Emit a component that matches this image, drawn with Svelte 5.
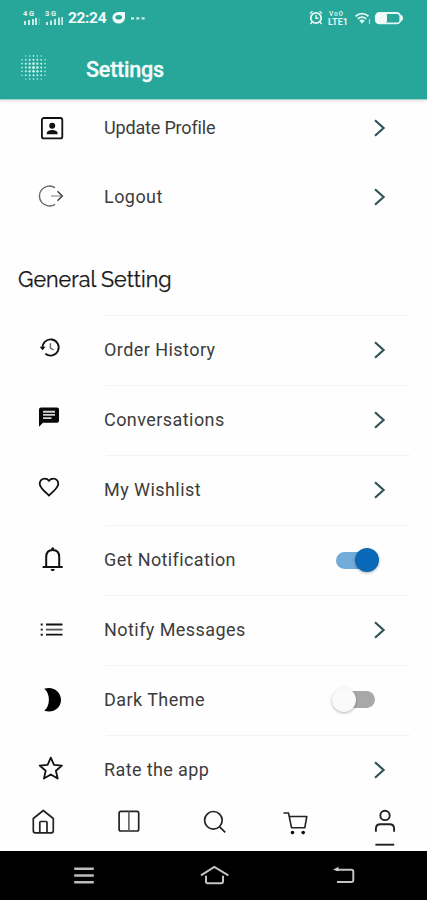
<script>
  const account = [
    { icon: 'profile', label: 'Update Profile', tight: true },
    { icon: 'logout', label: 'Logout' }
  ];
  const general = [
    { icon: 'history', label: 'Order History' },
    { icon: 'chat', label: 'Conversations' },
    { icon: 'heart', label: 'My Wishlist' },
    { icon: 'bell', label: 'Get Notification', toggle: 'on', mid: true },
    { icon: 'list', label: 'Notify Messages' },
    { icon: 'moon', label: 'Dark Theme', toggle: 'off' },
    { icon: 'star', label: 'Rate the app', mid: true }
  ];
  const dots = [];
  for (let r = -3; r <= 3; r++)
    for (let c = -3; c <= 3; c++) {
      const d = Math.hypot(r, c);
      if (d < 3.7) dots.push({ x: 12 + c * 3.7, y: 12 + r * 3.7, s: 1.45 - d * 0.22 });
    }
</script>

{#snippet glyph(name)}
  <svg class="glyph" width="32" height="32" viewBox="0 0 32 32" fill="none" stroke="#111" stroke-width="1.8">
    {#if name === 'profile'}
      <rect x="6.9" y="6" width="20.4" height="20.4" rx="2" />
      <circle cx="17.2" cy="13.7" r="3" fill="#111" stroke="none" />
      <path d="M11.8 22.3v-1.2c0-2 3.2-3.2 5.4-3.2s5.4 1.2 5.4 3.2v1.2z" fill="#111" stroke="none" />
    {:else if name === 'logout'}
      <path d="M19.5 7.2A10 10 0 1 0 19.5 23.8" transform="translate(.5 -.5)" stroke="#666" stroke-width="1.4" />
      <path d="M16 15h11" stroke="#999" stroke-width="1.3" />
      <path d="M22.5 10.3l4.8 4.7-4.8 4.7" stroke="#444" stroke-width="1.5" />
    {:else if name === 'history'}
      <path d="M7.6 14.5A8.1 8.1 0 1 1 10.3 19.6" />
      <path d="M4.6 12.7h6l-3 3.6z" fill="#111" stroke="none" />
      <path d="M15.4 9.2v4.8l3.3 2" stroke="#666" stroke-width="1.4" />
    {:else if name === 'chat'}
      <path d="M6 3.4h16a2 2 0 0 1 2 2v11.4a2 2 0 0 1-2 2H8l-4 4V5.4a2 2 0 0 1 2-2z" fill="#080808" stroke="none" />
      <path d="M8 7.7h12M8 10.9h12M8 14.1h8.5" stroke="#d5d5d5" stroke-width="1.9" />
    {:else if name === 'heart'}
      <path d="M14 21.5l-1.4-1.3C7.5 15.7 4.7 13 4.7 9.7A4.9 4.9 0 0 1 9.6 4.7c1.7 0 3.4.8 4.4 2.1 1-1.3 2.7-2.1 4.4-2.1a4.9 4.9 0 0 1 4.9 5c0 3.3-2.8 6-7.9 10.5z" />
    {:else if name === 'bell'}
      <path d="M11.2 22.2v-9.1c0-4.4 2.5-7.1 6.5-7.1s6.5 2.7 6.5 7.1v9.1M7.6 22.9h20.1" stroke-width="2" />
      <path d="M16.2 5.8v-1.1a1.5 1.5 0 0 1 3 0v1.1zM15.6 25.1h4.2a2.1 2.1 0 0 1-4.2 0z" fill="#111" stroke="none" />
    {:else if name === 'list'}
      <path d="M11 10.5h16.5M11 20.7h16.5" />
      <path d="M11 15.6h16.5" stroke="#555" />
      <path d="M5.7 10.5h2M5.7 15.6h2M5.7 20.7h2" stroke-width="1.9" />
    {:else if name === 'moon'}
      <path d="M9.2 4.8C18 1.7 26 7.6 26 15.8S18 29.8 9.2 26.8C15.5 22.2 15.5 9.3 9.2 4.8z" fill="#000" stroke="none" />
    {:else if name === 'star'}
      <path d="M15.8 3.6l3.2 7.3 7.9.7-6 5.2 1.8 7.8-6.9-4.1-6.9 4.1 1.8-7.8-6-5.2 7.9-.7z" stroke-linejoin="round" />
    {/if}
  </svg>
{/snippet}

{#snippet row(item)}
  <div class="row">
    {@render glyph(item.icon)}
    <span class="label" class:tight={item.tight} class:mid={item.mid}>{item.label}</span>
    {#if item.toggle}
      <span class="switch {item.toggle}"><i></i></span>
    {:else}
      <svg class="chevron" width="14" height="20" viewBox="0 0 14 20" fill="none" stroke="#31545a" stroke-width="2.2">
        <path d="M2 2.2l8.6 7.8L2 17.8" />
      </svg>
    {/if}
  </div>
{/snippet}

<div class="screen">
  <header>
    <div class="status">
      <svg class="signal" width="45" height="16" viewBox="0 0 45 16" fill="#e5f7f3">
        <text x="1" y="5.5" font-size="7.5" textLength="11">4G</text>
        <path d="M2 11h2v4H2zM6 10h2v5H6zM10 9h2v6h-2zM13 8h2v7h-2z" opacity=".85" />
        <path d="M16.5 8h1.5v7h-1.5z" opacity=".25" />
        <text x="23" y="5.5" font-size="7.5" textLength="11">3G</text>
        <path d="M24 12h2v3h-2zM28 10.5h2V15h-2zM32 9h2v6h-2zM36 7.5h2v7.5h-2zM39.3 7h1.7v8h-1.7z" opacity=".85" />
      </svg>
      <span class="time">22:24</span>
      <svg class="drop" width="34" height="14" viewBox="0 0 34 14">
        <path d="M6.5 1H12q1 0 1 1v5A6.3 5.8 0 1 1 6.5 1z" fill="#effaf8" />
        <ellipse cx="6.7" cy="6.3" rx="3.3" ry="2.3" fill="#27a69a" />
        <path d="M19 7.3h3M24.3 7.3h3M29.6 7.3h3" stroke="#cdeee8" stroke-width="2.2" />
      </svg>
      <svg class="state" width="98" height="18" viewBox="0 0 98 18" fill="none" stroke="#e5f7f3">
        <circle cx="8" cy="9" r="5.2" stroke-width="1.8" />
        <path d="M8 6v3.3h2.5M2 4.5l2.5-2.3M14 4.5l-2.5-2.3M4 13l-1.5 2M12 13l1.5 2" stroke-width="1.4" />
        <text x="21" y="7.4" font-size="6.5" fill="#d0eee9" stroke="none" textLength="14">VoO</text>
        <text x="20" y="16" font-size="9" fill="#e5f7f3" stroke="none" textLength="20">LTE1</text>
        <path d="M47.5 7.3q6.5-5.4 13 0M49.8 9.8q4.2-3.4 8.4 0" stroke-width="1.8" />
        <path d="M51.3 11.4q2.7-2 5.4 0L54 14.8z" fill="#e5f7f3" stroke="none" />
        <path d="M61.5 10v5" stroke-width="1.2" opacity=".7" />
        <rect x="67.8" y="4" width="24.5" height="10.4" rx="3.5" stroke-width="1.8" />
        <path d="M93.5 6.3q2.5 2.9 0 5.8z" fill="#e5f7f3" />
        <rect x="68" y="4.3" width="11" height="9.8" rx="2" fill="#f2fbfa" stroke="none" />
      </svg>
    </div>
    <div class="appbar">
      <svg width="25" height="25" viewBox="0 0 24 24" fill="#c9f5ec">
        {#each dots as d}<circle cx={d.x} cy={d.y} r={d.s} />{/each}
      </svg>
      <h1>Settings</h1>
    </div>
  </header>

  <main>
    <section class="account">
      {#each account as item}{@render row(item)}{/each}
    </section>
    <h2>General Setting</h2>
    <section class="general">
      {#each general as item}{@render row(item)}{/each}
    </section>
  </main>

  <nav>
    <svg width="427" height="60" viewBox="0 0 427 60" fill="none" stroke="#222" stroke-width="1.7" stroke-linejoin="round">
      <path d="M33.3 27.5l10-8 10 8v12.3q0 2-2 2h-16q-2 0-2-2z" />
      <path d="M39.8 41.3V31.5q0-1 1-1h5.2q1 0 1 1v9.8" />
      <rect x="119.1" y="20.3" width="19.6" height="19.7" rx="1.8" />
      <path d="M128.9 20.5v19.5" stroke="#666" />
      <circle cx="213.4" cy="29.3" r="8.8" />
      <path d="M219.6 35.8l5.6 5.6" />
      <path d="M283.5 22h5l3 14.7h13.3l2-11.2h-17.6" stroke-width="1.6" />
      <circle cx="292.5" cy="41.6" r="1.8" fill="#111" stroke="none" />
      <circle cx="303.2" cy="41.6" r="1.8" fill="#111" stroke="none" />
      <circle cx="385" cy="24.4" r="4.7" stroke-width="1.9" />
      <path d="M375.9 40.8v-3.1q0-4.5 4.5-4.5h9.2q4.5 0 4.5 4.5v3.1" stroke-width="1.9" />
      <path d="M375.4 53.7h18.8" stroke-width="1.9" />
    </svg>
  </nav>

  <footer>
    <svg width="427" height="49" viewBox="0 0 427 49" fill="none" stroke="#c4c4c4" stroke-width="2">
      <path d="M74.2 17.8h19.6M74.2 24.5h19.6M74.2 31.2h19.6" stroke="#bdbdbd" stroke-width="2.6" />
      <path d="M201 24.3l13.3-8.3 14 8.3M206 24.8v5.7q0 1.7 1.7 1.7h13.6q1.7 0 1.7-1.7v-5.7" />
      <path d="M336 18.7h15.3q2 0 2 2v8.3q0 2-2 2H337" />
      <path d="M333 18.7l5.5-3v4.5z" fill="#d0d0d0" stroke="none" />
    </svg>
  </footer>
</div>

<style>
  :global(body) { margin: 0; background: #fefefe; }
  .screen {
    width: 427px;
    height: 900px;
    display: flex;
    flex-direction: column;
    overflow: hidden;
    background: #fefefe;
    font-family: Roboto, "Liberation Sans", sans-serif;
  }
  header {
    flex: none;
    height: 99px;
    background: #27a69a;
    color: #f2fbfa;
    border-bottom: 1px solid #9ed5cf;
    box-shadow: 0 1px 3px rgba(80, 30, 30, .15);
    z-index: 1;
  }
  .status { height: 35px; display: flex; align-items: center; box-sizing: border-box; padding-left: 22px; }
  .signal { margin-top: 1px; font-weight: 700; overflow: visible; }
  .time { width: 40px; margin-left: 1px; font-size: 15.5px; font-weight: 700; line-height: 18px; letter-spacing: -.35px; }
  .drop { margin-left: 4px; }
  .state { margin-left: 162px; font-weight: 700; }
  .appbar { height: 64px; display: flex; align-items: center; padding-left: 21px; }
  .appbar svg { overflow: visible; margin-top: 1px; }
  h1 { margin: 6px 0 0 40px; font-size: 21.5px; line-height: 28px; font-weight: 500; letter-spacing: -.2px; -webkit-text-stroke: .3px; }
  main { flex: none; height: 691px; overflow: hidden; }
  .row { height: 69px; display: flex; align-items: center; padding: 0 41px 0 35px; }
  .account { margin-top: -7px; }
  .general .row { height: 69.9px; box-sizing: border-box; position: relative; }
  .general .row::before {
    content: "";
    position: absolute;
    left: 106px;
    right: 17px;
    top: 0;
    height: 1px;
    background: #f3f3f3;
  }
  .glyph { flex: none; }
  .label { flex: 1; margin-left: 37px; font-size: 18px; line-height: 24px; letter-spacing: .44px; color: #3c3c3c; white-space: nowrap; }
  .label.tight { letter-spacing: -.17px; }
  .label.mid { letter-spacing: .38px; }
  h2 {
    height: 84.4px;
    margin: 0;
    padding: 36px 0 0 18px;
    box-sizing: border-box;
    font: 400 21.5px/26px Raleway, Lato, sans-serif;
    -webkit-text-stroke: .25px;
    color: #161616;
  }
  .chevron { flex: none; margin-right: -1px; }
  .switch { flex: none; position: relative; width: 34px; height: 17px; border-radius: 9px; }
  .switch i { position: absolute; top: -3.5px; width: 24px; height: 24px; border-radius: 50%; box-shadow: 0 1px 3px rgba(0, 0, 0, .3); }
  .on { background: #73acd9; margin-right: 16px; }
  .on i { right: -9px; background: #0968b7; }
  .off { background: #a8a8a8; margin-right: 11px; }
  .off i { left: -9px; background: #fafafa; }
  nav { height: 60px; flex: none; background: #fefefe; }
  footer { height: 49px; flex: none; background: #000; }
  nav svg, footer svg { display: block; }
</style>
